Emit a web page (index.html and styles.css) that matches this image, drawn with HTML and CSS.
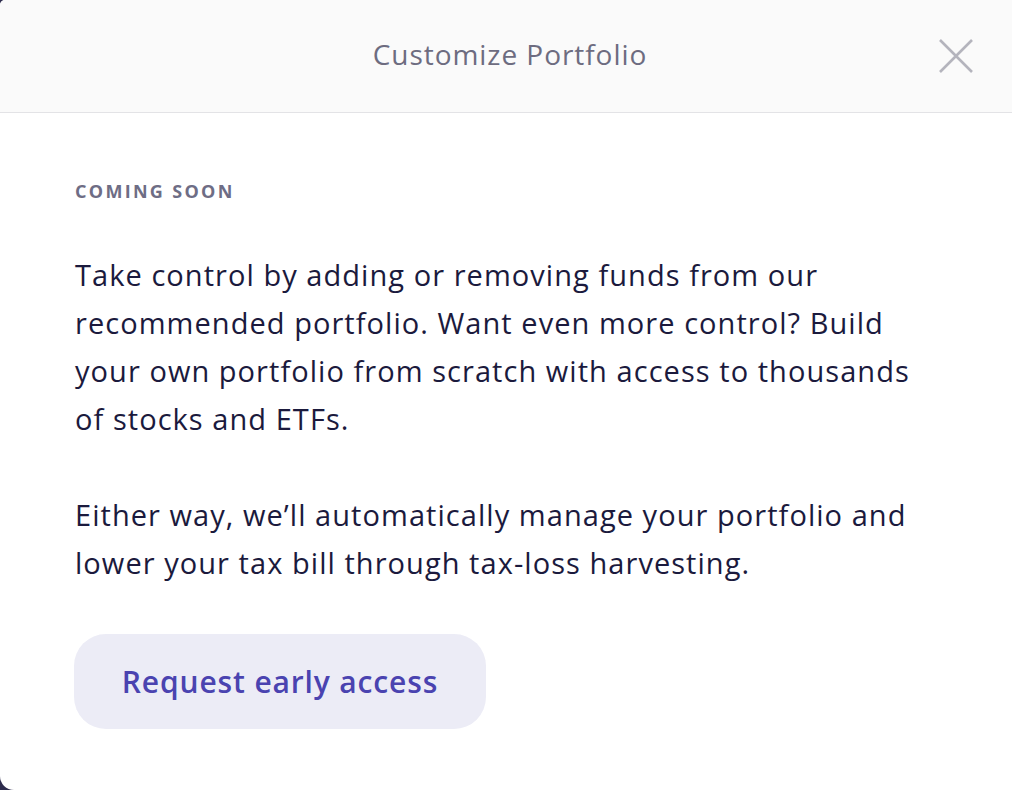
FILE: index.html
```html
<!DOCTYPE html>
<html lang="en">
<head>
<meta charset="utf-8">
<title>Customize Portfolio</title>
<link rel="stylesheet" href="styles.css">
</head>
<body>
<div class="modal">
  <header class="modal-header">
    <h1 class="modal-title">Customize Portfolio</h1>
    <button class="close" aria-label="Close">
      <svg width="34" height="34" viewBox="0 0 34 34"><path d="M1 1 L33 33 M33 1 L1 33" stroke="#b4b4bd" stroke-width="2.6" fill="none"/></svg>
    </button>
  </header>
  <section class="modal-body">
    <div class="eyebrow">COMING SOON</div>
    <p class="text">Take control by adding or removing funds from our recommended portfolio. Want even more control? Build your own portfolio from scratch with access to thousands of stocks and ETFs.</p>
    <p class="text">Either way, we’ll automatically manage your portfolio and lower your tax bill through tax-loss harvesting.</p>
    <button class="cta">Request early access</button>
  </section>
</div>
</body>
</html>
```
FILE: styles.css
```css
html, body {
  margin: 0;
  height: 100%;
}
body {
  background: #2e2c4d;
  font-family: "Open Sans", "Liberation Sans", sans-serif;
  overflow: hidden;
}
.modal {
  background: #ffffff;
  height: 790px;
  border-radius: 5px 0 0 14px;
  overflow: hidden;
}
.modal-header {
  height: 112px;
  background: #fafafa;
  border-bottom: 1px solid #e3e3e6;
  display: flex;
  align-items: center;
  justify-content: center;
  position: relative;
}
.modal-title {
  margin: 0 0 4px 8px;
  font-weight: 400;
  font-size: 28px;
  color: #6d6c80;
  letter-spacing: 0.95px;
}
.close {
  position: absolute;
  right: 39px;
  top: 39px;
  width: 34px;
  height: 34px;
  padding: 0;
  border: 0;
  background: none;
  display: flex;
}
.modal-body {
  padding: 66px 75px 0 75px;
}
.eyebrow {
  font-size: 18px;
  font-weight: 700;
  letter-spacing: 2.3px;
  color: #6e6d85;
  line-height: 24px;
  margin-bottom: 48px;
}
.text {
  margin: 0 0 48px 0;
  font-size: 29px;
  line-height: 48px;
  letter-spacing: 1.05px;
  color: #1b1a3d;
  max-width: 860px;
}
.cta {
  margin-top: -1px;
  width: 412px;
  height: 95px;
  border: 0;
  border-radius: 32px;
  background: #ececf6;
  color: #4a43b0;
  font-family: inherit;
  font-size: 30px;
  font-weight: 600;
  letter-spacing: 0.85px;
  margin-left: -1px;
}
```
